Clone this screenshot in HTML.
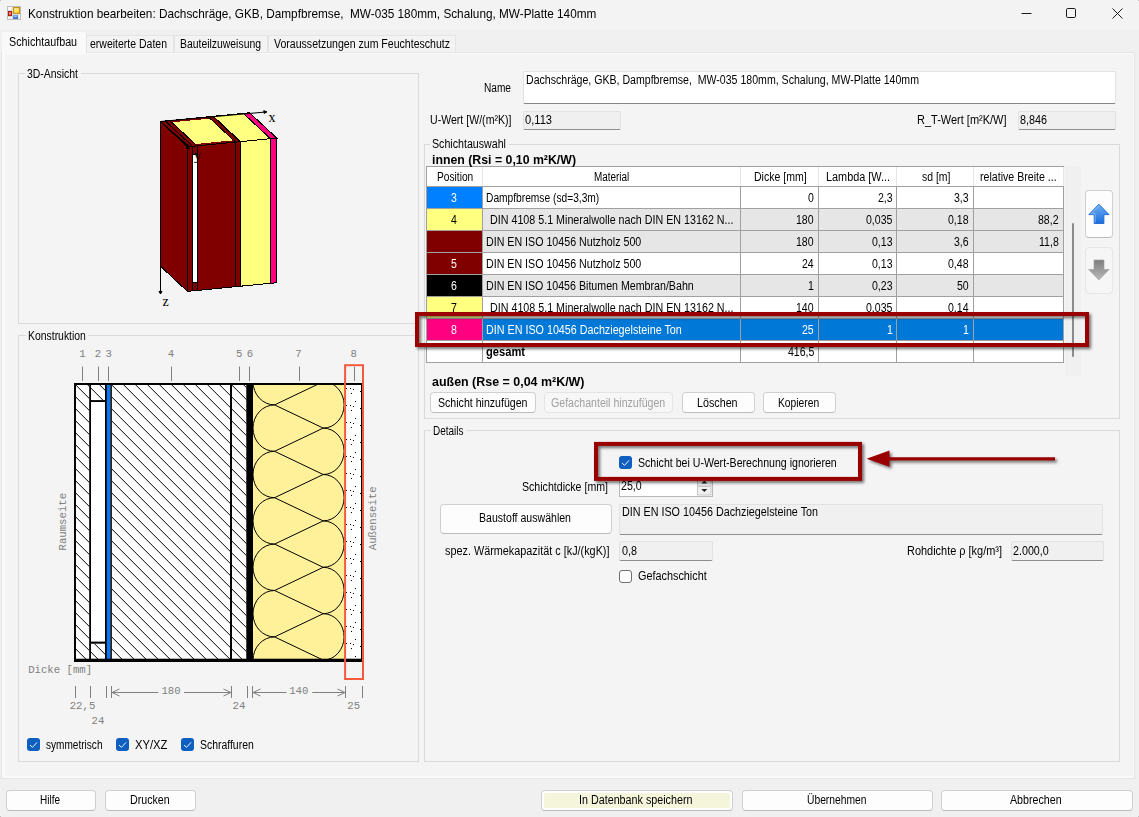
<!DOCTYPE html>
<html lang="de">
<head>
<meta charset="utf-8">
<title>Konstruktion bearbeiten</title>
<style>
html,body{margin:0;padding:0;}
body{width:1139px;height:817px;overflow:hidden;position:relative;background:#f0f0f0;
 font-family:"Liberation Sans",sans-serif;font-size:11px;color:#000;}
.a{position:absolute;box-sizing:border-box;}
.t{position:absolute;white-space:pre;}
.titlebar{left:0;top:0;width:1139px;height:29px;background:#f3f3f3;}
.band{left:1px;top:52px;width:1134px;height:727px;background:#fafafa;border:1px solid #e5e5e5;}
.page{left:5px;top:54px;width:1128px;height:722px;background:#f4f4f4;}
.tab{background:#f3f3f3;border:1px solid #e4e4e4;border-bottom:none;top:35px;height:18px;}
.tabact{background:#f9f9f9;top:32px;height:23px;left:2px;width:84px;border-radius:3px 3px 0 0;}
.gb{border:1px solid #dadada;}
.gbl{background:#f4f4f4;height:12px;}
.ro{background:#f0f0f0;border:1px solid #e2e2e2;border-bottom:1px solid #8f8f8f;border-radius:2px;}
.tb{background:#fff;border:1px solid #e2e2e2;border-bottom:1px solid #868686;border-radius:2px;}
.btn{background:#fdfdfd;border:1px solid #d0d0d0;border-bottom-color:#bcbcbc;border-radius:4px;}
.cb{width:13px;height:13px;border-radius:3px;}
.cbon{background:#0f5fc0;}
.cboff{background:#fdfdfd;border:1px solid #707070;}
.mono{font-family:"Liberation Mono",monospace;font-size:10.67px;fill:#808080;}
.ser{font-family:"Liberation Serif",serif;font-size:14px;fill:#000;}
</style>
</head>
<body>
<div class="a titlebar"></div>
<div class="a" style="left:0;top:0;width:1px;height:1px;background:#bdbdbd"></div><div class="a" style="left:1138px;top:0;width:1px;height:1px;background:#bdbdbd"></div><div class="a" style="left:0;top:816px;width:1px;height:1px;background:#bdbdbd"></div><div class="a" style="left:1138px;top:816px;width:1px;height:1px;background:#bdbdbd"></div>
<svg class="a" style="left:7px;top:6px" width="14" height="14" viewBox="0 0 14 14">
<defs><linearGradient id="iy" x1="0" y1="0" x2="1" y2="1"><stop offset="0" stop-color="#fff6c0"/><stop offset="1" stop-color="#ffcf1a"/></linearGradient>
<linearGradient id="ib" x1="0" y1="0" x2="0" y2="1"><stop offset="0" stop-color="#78b4f2"/><stop offset="1" stop-color="#2558c8"/></linearGradient></defs>
<rect x="0.5" y="0.5" width="13" height="13" fill="#dcdcdc" stroke="#bdbdbd"/>
<rect x="1.2" y="1.2" width="3.6" height="2.6" fill="#fff"/>
<rect x="1.2" y="11" width="1.7" height="1.8" fill="#fff"/><rect x="3.8" y="11" width="1.1" height="1.8" fill="#fff"/>
<rect x="11.8" y="9" width="1.1" height="3.8" fill="#fff"/>
<rect x="6.6" y="1.6" width="5.9" height="5.7" fill="url(#iy)" stroke="#c79200" stroke-width="1.1"/>
<rect x="1.5" y="5.5" width="3.1" height="4.1" fill="#e8473a" stroke="#9f1408" stroke-width="0.9"/>
<rect x="2.3" y="6.3" width="1.4" height="2" fill="#f9a8a0"/>
<rect x="6.1" y="8.9" width="4.9" height="4" fill="url(#ib)"/>
<rect x="7" y="10" width="2.6" height="1.2" fill="#a8c8ff" opacity="0.8"/>
</svg>
<svg class="a" style="left:1010px;top:0" width="129" height="29" viewBox="0 0 129 29">
<path d="M11.5 13.5H21.5" stroke="#1a1a1a" stroke-width="1" fill="none"/>
<rect x="56.5" y="8.5" width="9" height="9" rx="1.2" fill="none" stroke="#1a1a1a" stroke-width="1"/>
<path d="M102.5 8.5L112.5 18.5M112.5 8.5L102.5 18.5" stroke="#1a1a1a" stroke-width="1" fill="none"/>
</svg>
<div class="a tab" style="left:86px;width:88px"></div><div class="a tab" style="left:174px;width:94px"></div><div class="a tab" style="left:268px;width:188px"></div>
<div class="a band"></div><div class="a page"></div><div class="a tabact"></div>
<div class="a gb" style="left:18px;top:73px;width:401px;height:251px"></div><div class="a gbl" style="left:25px;top:68px;width:56px"></div>
<div class="a gb" style="left:18px;top:335px;width:401px;height:427px"></div><div class="a gbl" style="left:25.6px;top:330px;width:62.9px"></div>
<div class="a gb" style="left:424px;top:144px;width:696px;height:275px"></div><div class="a gbl" style="left:430px;top:139px;width:79px"></div>
<div class="a gb" style="left:424px;top:430px;width:696px;height:332px"></div><div class="a gbl" style="left:430.5px;top:425px;width:35.5px"></div>
<div class="a tb" style="left:522.5px;top:70.5px;width:593.5px;height:33px"></div>
<div class="a ro" style="left:522.5px;top:110.5px;width:98.5px;height:19px"></div>
<div class="a ro" style="left:1017.5px;top:110.5px;width:98.5px;height:19px"></div>
<div class="a" style="left:426px;top:166px;width:638px;height:197px;background:#fff;border:1px solid #a0a0a0;border-right:none"></div>
<div class="a" style="left:1065px;top:166px;width:16px;height:210px;background:#f0f0f0"></div>
<div class="a" style="left:1072px;top:223px;width:2px;height:134px;background:#8b8b8b;border-radius:1px"></div>
<div class="a" style="left:427px;top:186px;width:55px;height:22px;background:#0080ff"></div>
<div class="a" style="left:482px;top:186px;width:581px;height:22px;background:#fff"></div>
<div class="a" style="left:427px;top:208px;width:55px;height:22px;background:#ffff80"></div>
<div class="a" style="left:482px;top:208px;width:581px;height:22px;background:#e6e6e6"></div>
<div class="a" style="left:427px;top:230px;width:55px;height:22px;background:#800000"></div>
<div class="a" style="left:482px;top:230px;width:581px;height:22px;background:#e6e6e6"></div>
<div class="a" style="left:427px;top:252px;width:55px;height:22px;background:#800000"></div>
<div class="a" style="left:482px;top:252px;width:581px;height:22px;background:#fff"></div>
<div class="a" style="left:427px;top:274px;width:55px;height:22px;background:#000"></div>
<div class="a" style="left:482px;top:274px;width:581px;height:22px;background:#e6e6e6"></div>
<div class="a" style="left:427px;top:296px;width:55px;height:22px;background:#ffff80"></div>
<div class="a" style="left:482px;top:296px;width:581px;height:22px;background:#fff"></div>
<div class="a" style="left:427px;top:318px;width:55px;height:22px;background:#ff0080"></div>
<div class="a" style="left:482px;top:318px;width:581px;height:22px;background:#0078d7"></div>
<div class="a" style="left:427px;top:340px;width:55px;height:22px;background:#fff"></div>
<div class="a" style="left:482px;top:340px;width:581px;height:22px;background:#fff"></div>
<div class="a" style="left:426px;top:186px;width:638px;height:1px;background:#a0a0a0"></div>
<div class="a" style="left:426px;top:208px;width:638px;height:1px;background:#a0a0a0"></div>
<div class="a" style="left:426px;top:230px;width:638px;height:1px;background:#a0a0a0"></div>
<div class="a" style="left:426px;top:252px;width:638px;height:1px;background:#a0a0a0"></div>
<div class="a" style="left:426px;top:274px;width:638px;height:1px;background:#a0a0a0"></div>
<div class="a" style="left:426px;top:296px;width:638px;height:1px;background:#a0a0a0"></div>
<div class="a" style="left:426px;top:318px;width:638px;height:1px;background:#a0a0a0"></div>
<div class="a" style="left:426px;top:340px;width:638px;height:1px;background:#a0a0a0"></div>
<div class="a" style="left:426px;top:362px;width:638px;height:1px;background:#a0a0a0"></div>
<div class="a" style="left:482px;top:167px;width:1px;height:19px;background:#e5e5e5"></div>
<div class="a" style="left:482px;top:186px;width:1px;height:177px;background:#a0a0a0"></div>
<div class="a" style="left:740px;top:167px;width:1px;height:19px;background:#e5e5e5"></div>
<div class="a" style="left:740px;top:186px;width:1px;height:177px;background:#a0a0a0"></div>
<div class="a" style="left:818px;top:167px;width:1px;height:19px;background:#e5e5e5"></div>
<div class="a" style="left:818px;top:186px;width:1px;height:177px;background:#a0a0a0"></div>
<div class="a" style="left:896px;top:167px;width:1px;height:19px;background:#e5e5e5"></div>
<div class="a" style="left:896px;top:186px;width:1px;height:177px;background:#a0a0a0"></div>
<div class="a" style="left:973px;top:167px;width:1px;height:19px;background:#e5e5e5"></div>
<div class="a" style="left:973px;top:186px;width:1px;height:177px;background:#a0a0a0"></div>
<div class="a" style="left:1063px;top:167px;width:1px;height:19px;background:#e5e5e5"></div>
<div class="a" style="left:1063px;top:186px;width:1px;height:177px;background:#a0a0a0"></div>
<div class="a btn" style="left:1085px;top:190px;width:28px;height:48px"></div>
<div class="a btn" style="left:1085px;top:246.5px;width:28px;height:47.5px;background:#f6f6f6;border-color:#e6e6e6"></div>
<svg class="a" style="left:1085px;top:190px" width="28" height="105" viewBox="1085 190 28 105">
<defs><linearGradient id="gu" x1="0" y1="0" x2="0" y2="1"><stop offset="0" stop-color="#6cb0f4"/><stop offset="1" stop-color="#1a6cdc"/></linearGradient>
<linearGradient id="gd" x1="0" y1="0" x2="0" y2="1"><stop offset="0" stop-color="#7e7e7e"/><stop offset="1" stop-color="#b9b9b9"/></linearGradient></defs>
<path d="M1098.9 204.2L1109 214.6H1103.9V223.5H1094.2V214.6H1088.9Z" fill="url(#gu)" stroke="#1c66d2" stroke-width="0.9" stroke-linejoin="round"/><path d="M1098.9 205.8L1091.2 213.7H1095.2V222.6" fill="none" stroke="#a6d2fb" stroke-width="0.7" opacity="0.85"/>
<path d="M1094 260H1104V269.4H1109.2L1098.9 280L1088.7 269.4H1094Z" fill="url(#gd)" stroke="#a0a0a0" stroke-width="0.6"/>
</svg>
<div class="a btn" style="left:430px;top:392px;width:105.5px;height:21px"></div>
<div class="a btn" style="left:544px;top:392px;width:129px;height:21px;background:#f7f7f7;border-color:#e4e4e4"></div>
<div class="a btn" style="left:682px;top:392px;width:72.7px;height:21px"></div>
<div class="a btn" style="left:763px;top:392px;width:72.5px;height:21px"></div>
<div class="a cb cbon" style="left:619px;top:456px"></div><svg class="a" style="left:619px;top:456px" width="13" height="13" viewBox="0 0 13 13"><path d="M3.3 7.3L5.5 9.4L9.8 4.6" fill="none" stroke="#eef4fc" stroke-width="1" stroke-linecap="round" stroke-linejoin="round"/></svg>
<div class="a" style="left:619px;top:477.5px;width:94px;height:19px;background:#fff;border:1px solid #b8b8b8"></div>
<svg class="a" style="left:697px;top:477px" width="15" height="19" viewBox="0 0 15 19">
<rect x="0.5" y="0.5" width="13.5" height="8.5" fill="#f0f0f0" stroke="#c8c8c8"/><rect x="0.5" y="9.5" width="13.5" height="8.5" fill="#f0f0f0" stroke="#c8c8c8"/>
<path d="M4.3 6.5L7.3 3.5L10.3 6.5Z" fill="#222"/><path d="M4.3 12L7.3 15L10.3 12Z" fill="#222"/></svg>
<div class="a btn" style="left:440px;top:504px;width:172px;height:29.5px"></div>
<div class="a ro" style="left:619px;top:503.5px;width:484px;height:31px"></div>
<div class="a ro" style="left:619px;top:541px;width:94px;height:19.5px"></div>
<div class="a ro" style="left:1010.5px;top:541px;width:93px;height:19.5px"></div>
<div class="a cb cboff" style="left:619px;top:570px"></div>
<div class="a cb cbon" style="left:27px;top:738px"></div><svg class="a" style="left:27px;top:738px" width="13" height="13" viewBox="0 0 13 13"><path d="M3.3 7.3L5.5 9.4L9.8 4.6" fill="none" stroke="#eef4fc" stroke-width="1" stroke-linecap="round" stroke-linejoin="round"/></svg><div class="a cb cbon" style="left:116px;top:738px"></div><svg class="a" style="left:116px;top:738px" width="13" height="13" viewBox="0 0 13 13"><path d="M3.3 7.3L5.5 9.4L9.8 4.6" fill="none" stroke="#eef4fc" stroke-width="1" stroke-linecap="round" stroke-linejoin="round"/></svg><div class="a cb cbon" style="left:181px;top:738px"></div><svg class="a" style="left:181px;top:738px" width="13" height="13" viewBox="0 0 13 13"><path d="M3.3 7.3L5.5 9.4L9.8 4.6" fill="none" stroke="#eef4fc" stroke-width="1" stroke-linecap="round" stroke-linejoin="round"/></svg>
<div class="a btn" style="left:5.5px;top:790px;width:90.5px;height:21px"></div>
<div class="a btn" style="left:105px;top:790px;width:91px;height:21px"></div>
<div class="a btn" style="left:741.5px;top:790px;width:191px;height:21px"></div>
<div class="a btn" style="left:941px;top:790px;width:191.6px;height:21px"></div>
<div class="a btn" style="left:541px;top:790px;width:191.5px;height:21px;background:#fdfdfd"><div class="a" style="left:2px;top:2px;right:2px;bottom:2px;background:#f5f5dc;border-radius:2px"></div></div>
<svg class="a" style="left:0;top:0" width="430" height="770" viewBox="0 0 430 770">
<defs>
<pattern id="hat" patternUnits="userSpaceOnUse" width="12" height="12" patternTransform="translate(2.8,0)">
<path d="M-1 -1L13 13M-13 -1L1 13M11 -1L25 13" stroke="#000" stroke-width="1" fill="none"/></pattern>
<pattern id="dots" patternUnits="userSpaceOnUse" width="17" height="17" patternTransform="translate(346,388)">
<g fill="#000" shape-rendering="crispEdges"><rect x="0" y="0" width="1" height="1"/><rect x="4" y="0" width="1" height="1"/><rect x="7" y="1" width="1" height="1"/><rect x="5" y="5" width="1" height="1"/><rect x="9" y="13" width="1" height="1"/><rect x="14" y="3" width="1" height="1"/></g></pattern>
<clipPath id="cy"><rect x="253" y="385" width="91.1" height="274"/></clipPath>
</defs>
<g shape-rendering="crispEdges">
<polygon points="160.3,121.5 187.5,146.8 187.5,291.4 160.3,266.1" fill="#800000" stroke="#000" stroke-width="1"/>
<polygon points="160.3,121.5 165.3,121.0 192.5,146.3 187.5,146.8" fill="#800000" stroke="#000" stroke-width="1"/>
<polygon points="187.5,146.8 192.5,146.3 192.5,290.9 187.5,291.4" fill="#800000" stroke="#000" stroke-width="1"/>
<polygon points="165.3,121.0 170.0,120.6 197.2,145.9 192.5,146.3" fill="#800000" stroke="#000" stroke-width="1"/>
<polygon points="192.5,146.3 197.2,145.9 197.2,290.5 192.5,290.9" fill="#fff" stroke="#000" stroke-width="1"/>
<polygon points="192.5,146.3 197.2,145.9 197.2,154.4 192.5,154.8" fill="#800000" stroke="#000" stroke-width="1"/>
<polygon points="192.5,282.4 197.2,282.0 197.2,290.5 192.5,290.9" fill="#800000" stroke="#000" stroke-width="1"/>
<polygon points="170.0,120.6 208.3,116.8 235.5,142.1 197.2,145.9" fill="#ffff80" stroke="#000" stroke-width="1"/>
<polygon points="170.0,120.6 208.3,116.8 210.2,118.6 171.9,122.3" fill="#800000"/>
<polygon points="195.3,144.1 233.6,140.3 235.5,142.1 197.2,145.9" fill="#800000"/>
<polygon points="197.2,145.9 235.5,142.1 235.5,286.7 197.2,290.5" fill="#800000" stroke="#000" stroke-width="1"/>
<polygon points="208.3,116.8 213.0,116.4 240.2,141.7 235.5,142.1" fill="#800000" stroke="#000" stroke-width="1"/>
<polygon points="235.5,142.1 240.2,141.7 240.2,286.3 235.5,286.7" fill="#800000" stroke="#000" stroke-width="1"/>
<polygon points="213.0,116.4 213.3,116.3 240.5,141.6 240.2,141.7" fill="#000" stroke="#000" stroke-width="1"/>
<polygon points="240.2,141.7 240.5,141.6 240.5,286.2 240.2,286.3" fill="#000" stroke="#000" stroke-width="1"/>
<polygon points="213.3,116.3 243.3,113.4 270.5,138.7 240.5,141.6" fill="#ffff80" stroke="#000" stroke-width="1"/>
<polygon points="240.5,141.6 270.5,138.7 270.5,283.3 240.5,286.2" fill="#ffff80" stroke="#000" stroke-width="1"/>
<polygon points="243.3,113.4 249.6,112.8 276.8,138.1 270.5,138.7" fill="#ff0080" stroke="#000" stroke-width="1"/>
<polygon points="270.5,138.7 276.8,138.1 276.8,282.7 270.5,283.3" fill="#ff0080" stroke="#000" stroke-width="1"/>
</g>
<path d="M160.3 121.5L266.8 111.9M266.8 111.9l-3 -1.3l0.3 2.8zM160.5 121.5V293.5M160.5 294l-1.5 -2.6h3zM160.3 121.5L190 149l-3.8 -0.8l2.3 -2.6z" stroke="#000" stroke-width="1" fill="#000"/>
<text class="ser" x="268.5" y="122">x</text><text class="ser" x="162.5" y="305.5">z</text><text class="ser" x="194" y="159.5">y</text>
<rect x="75" y="384" width="287" height="276" fill="#fff"/>
<rect x="76" y="385" width="13.2" height="274" fill="url(#hat)"/>
<rect x="91" y="385" width="14" height="15.5" fill="url(#hat)"/><rect x="91" y="643.5" width="14" height="16" fill="url(#hat)"/>
<rect x="111.8" y="385" width="118.5" height="274" fill="url(#hat)"/>
<rect x="232" y="385" width="14.5" height="274" fill="url(#hat)"/>
<rect x="106.9" y="385" width="3.5" height="274" fill="#0078ff"/>
<rect x="253" y="385" width="91.1" height="274" fill="#fff19a"/>
<rect x="346" y="385" width="15.5" height="274" fill="url(#dots)"/>
<g clip-path="url(#cy)" fill="none" stroke="#000" stroke-width="1"><path d="M274.6 312.1A21.6 23.2 0 0 0 274.6 358.5M323.2 335.3A20.9 23.2 0 0 1 323.2 381.7M323.2 335.3L274.6 358.5L323.2 381.7M274.6 358.5A21.6 23.2 0 0 0 274.6 404.9M323.2 381.7A20.9 23.2 0 0 1 323.2 428.1M323.2 381.7L274.6 404.9L323.2 428.1M274.6 404.9A21.6 23.2 0 0 0 274.6 451.3M323.2 428.1A20.9 23.2 0 0 1 323.2 474.5M323.2 428.1L274.6 451.3L323.2 474.5M274.6 451.3A21.6 23.2 0 0 0 274.6 497.7M323.2 474.5A20.9 23.2 0 0 1 323.2 520.9M323.2 474.5L274.6 497.7L323.2 520.9M274.6 497.7A21.6 23.2 0 0 0 274.6 544.1M323.2 520.9A20.9 23.2 0 0 1 323.2 567.3M323.2 520.9L274.6 544.1L323.2 567.3M274.6 544.1A21.6 23.2 0 0 0 274.6 590.5M323.2 567.3A20.9 23.2 0 0 1 323.2 613.7M323.2 567.3L274.6 590.5L323.2 613.7M274.6 590.5A21.6 23.2 0 0 0 274.6 636.9M323.2 613.7A20.9 23.2 0 0 1 323.2 660.1M323.2 613.7L274.6 636.9L323.2 660.1M274.6 636.9A21.6 23.2 0 0 0 274.6 683.3M323.2 660.1A20.9 23.2 0 0 1 323.2 706.5M323.2 660.1L274.6 683.3L323.2 706.5M274.6 683.3A21.6 23.2 0 0 0 274.6 729.7M323.2 706.5A20.9 23.2 0 0 1 323.2 752.9M323.2 706.5L274.6 729.7L323.2 752.9"/></g>
<rect x="74" y="383" width="2" height="279" fill="#000"/>
<rect x="89.2" y="383" width="1.8" height="279" fill="#000"/>
<rect x="105" y="383" width="1.9" height="279" fill="#000"/>
<rect x="110.3" y="383" width="1.55" height="279" fill="#000"/>
<rect x="230" y="383" width="2" height="279" fill="#000"/>
<rect x="246.3" y="383" width="6.7" height="279" fill="#000"/>
<rect x="361" y="383" width="1.4" height="279" fill="#000"/>
<rect x="74" y="383" width="288.4" height="2" fill="#000"/><rect x="74" y="658.7" width="288.4" height="3.3" fill="#000"/>
<rect x="91" y="400.1" width="14" height="1.9" fill="#000"/><rect x="91" y="641.6" width="14" height="2.1" fill="#000"/>
<text class="mono" x="82.5" y="357" text-anchor="middle">1</text>
<path d="M82.5 366.5V381" stroke="#808080" stroke-width="1"/>
<text class="mono" x="98" y="357" text-anchor="middle">2</text>
<path d="M98.5 366.5V381" stroke="#808080" stroke-width="1"/>
<text class="mono" x="108.6" y="357" text-anchor="middle">3</text>
<path d="M108.5 366.5V381" stroke="#808080" stroke-width="1"/>
<text class="mono" x="171" y="357" text-anchor="middle">4</text>
<path d="M171.5 366.5V381" stroke="#808080" stroke-width="1"/>
<text class="mono" x="239.1" y="357" text-anchor="middle">5</text>
<path d="M239.5 366.5V381" stroke="#808080" stroke-width="1"/>
<text class="mono" x="249.9" y="357" text-anchor="middle">6</text>
<path d="M249.5 366.5V381" stroke="#808080" stroke-width="1"/>
<text class="mono" x="298.5" y="357" text-anchor="middle">7</text>
<path d="M299.5 366.5V381" stroke="#808080" stroke-width="1"/>
<text class="mono" x="353.7" y="357" text-anchor="middle">8</text>
<path d="M354.5 366.5V381" stroke="#808080" stroke-width="1"/>
<rect x="345.1" y="365.2" width="17.9" height="313.8" fill="none" stroke="#f55a3c" stroke-width="2"/>
<path d="M75.5 686V698M90.5 686V698M106.5 686V698M111.5 686V698M231.5 686V698M247.5 686V698M252.5 686V698M345.5 686V698M362.5 686V698M111.5 692.5H158.4M184 692.5H231.5M252.5 692.5H286.5M312.2 692.5H345.5M119.5 689L112 692.5L119.5 696M223.5 689L231 692.5L223.5 696M260.5 689L253 692.5L260.5 696M337.5 689L345 692.5L337.5 696" stroke="#808080" stroke-width="1" fill="none"/>
<text class="mono" x="171" y="694.2" text-anchor="middle">180</text><text class="mono" x="298.8" y="694.2" text-anchor="middle">140</text>
<text class="mono" x="82.5" y="708.8" text-anchor="middle">22,5</text><text class="mono" x="98" y="723.7" text-anchor="middle">24</text><text class="mono" x="239" y="708.8" text-anchor="middle">24</text><text class="mono" x="353.7" y="708.8" text-anchor="middle">25</text>
<text class="mono" x="28.2" y="672.8">Dicke [mm]</text>
<text class="mono" transform="translate(66,521.7) rotate(-90)" text-anchor="middle">Raumseite</text>
<text class="mono" transform="translate(376.3,518.3) rotate(-90)" text-anchor="middle">Außenseite</text>
</svg>
<div class="t" style="left:27.70px;top:7.00px;font-size:13px;line-height:13px;color:#000;transform:scaleX(0.9058);transform-origin:0 0;">Konstruktion bearbeiten: Dachschräge, GKB, Dampfbremse, &nbsp;MW-035 180mm, Schalung, MW-Platte 140mm</div>
<div class="t" style="left:9.20px;top:35.84px;font-size:12px;line-height:12px;color:#000;transform:scaleX(0.8953);transform-origin:0 0;">Schichtaufbau</div>
<div class="t" style="left:90.00px;top:37.84px;font-size:12px;line-height:12px;color:#000;transform:scaleX(0.8745);transform-origin:0 0;">erweiterte Daten</div>
<div class="t" style="left:180.00px;top:37.84px;font-size:12px;line-height:12px;color:#000;transform:scaleX(0.8672);transform-origin:0 0;">Bauteilzuweisung</div>
<div class="t" style="left:274.00px;top:37.84px;font-size:12px;line-height:12px;color:#000;transform:scaleX(0.8795);transform-origin:0 0;">Voraussetzungen zum Feuchteschutz</div>
<div class="t" style="left:484.00px;top:81.84px;font-size:12px;line-height:12px;color:#000;transform:scaleX(0.8433);transform-origin:0 0;">Name</div>
<div class="t" style="left:525.50px;top:73.84px;font-size:12px;line-height:12px;color:#000;transform:scaleX(0.8817);transform-origin:0 0;">Dachschräge, GKB, Dampfbremse, &nbsp;MW-035 180mm, Schalung, MW-Platte 140mm</div>
<div class="t" style="left:429.50px;top:114.34px;font-size:12px;line-height:12px;color:#000;transform:scaleX(0.8817);transform-origin:0 0;">U-Wert [W/(m²K)]</div>
<div class="t" style="left:525.00px;top:113.84px;font-size:12px;line-height:12px;color:#000;transform:scaleX(0.9265);transform-origin:0 0;">0,113</div>
<div class="t" style="left:917.00px;top:114.34px;font-size:12px;line-height:12px;color:#000;transform:scaleX(0.9153);transform-origin:0 0;">R_T-Wert [m²K/W]</div>
<div class="t" style="left:1019.50px;top:113.84px;font-size:12px;line-height:12px;color:#000;transform:scaleX(0.8991);transform-origin:0 0;">8,846</div>
<div class="t" style="left:432.00px;top:153.84px;font-size:12px;line-height:12px;color:#000;font-weight:bold;transform:scaleX(1.0259);transform-origin:0 0;">innen (Rsi = 0,10 m²K/W)</div>
<div class="t" style="left:432.00px;top:375.84px;font-size:12px;line-height:12px;color:#000;font-weight:bold;transform:scaleX(1.0371);transform-origin:0 0;">außen (Rse = 0,04 m²K/W)</div>
<div class="t" style="left:437.00px;top:171.04px;font-size:12px;line-height:12px;color:#000;transform:scaleX(0.8489);transform-origin:0 0;">Position</div>
<div class="t" style="left:594.25px;top:171.04px;font-size:12px;line-height:12px;color:#000;transform:scaleX(0.8258);transform-origin:0 0;">Material</div>
<div class="t" style="left:754.20px;top:171.04px;font-size:12px;line-height:12px;color:#000;transform:scaleX(0.8783);transform-origin:0 0;">Dicke [mm]</div>
<div class="t" style="left:826.30px;top:171.04px;font-size:12px;line-height:12px;color:#000;transform:scaleX(0.9052);transform-origin:0 0;">Lambda [W...</div>
<div class="t" style="left:921.80px;top:171.04px;font-size:12px;line-height:12px;color:#000;transform:scaleX(0.8692);transform-origin:0 0;">sd [m]</div>
<div class="t" style="left:980.00px;top:171.04px;font-size:12px;line-height:12px;color:#000;transform:scaleX(0.8846);transform-origin:0 0;">relative Breite ...</div>
<div class="t" style="left:451.06px;top:191.84px;font-size:12px;line-height:12px;color:#fff;transform:scaleX(0.8800);transform-origin:0 0;">3</div>
<div class="t" style="left:486.25px;top:191.84px;font-size:12px;line-height:12px;color:#000;transform:scaleX(0.8512);transform-origin:0 0;">Dampfbremse (sd=3,3m)</div>
<div class="t" style="left:808.12px;top:191.84px;font-size:12px;line-height:12px;color:#000;transform:scaleX(0.8800);transform-origin:0 0;">0</div>
<div class="t" style="left:877.82px;top:191.84px;font-size:12px;line-height:12px;color:#000;transform:scaleX(0.8800);transform-origin:0 0;">2,3</div>
<div class="t" style="left:954.32px;top:191.84px;font-size:12px;line-height:12px;color:#000;transform:scaleX(0.8800);transform-origin:0 0;">3,3</div>
<div class="t" style="left:451.06px;top:213.84px;font-size:12px;line-height:12px;color:#000;transform:scaleX(0.8800);transform-origin:0 0;">4</div>
<div class="t" style="left:489.50px;top:213.84px;font-size:12px;line-height:12px;color:#000;transform:scaleX(0.8926);transform-origin:0 0;">DIN 4108 5.1 Mineralwolle nach DIN EN 13162 N...</div>
<div class="t" style="left:796.37px;top:213.84px;font-size:12px;line-height:12px;color:#000;transform:scaleX(0.8800);transform-origin:0 0;">180</div>
<div class="t" style="left:866.07px;top:213.84px;font-size:12px;line-height:12px;color:#000;transform:scaleX(0.8800);transform-origin:0 0;">0,035</div>
<div class="t" style="left:948.44px;top:213.84px;font-size:12px;line-height:12px;color:#000;transform:scaleX(0.8800);transform-origin:0 0;">0,18</div>
<div class="t" style="left:1038.44px;top:213.84px;font-size:12px;line-height:12px;color:#000;transform:scaleX(0.8800);transform-origin:0 0;">88,2</div>
<div class="t" style="left:486.25px;top:235.84px;font-size:12px;line-height:12px;color:#000;transform:scaleX(0.8883);transform-origin:0 0;">DIN EN ISO 10456 Nutzholz 500</div>
<div class="t" style="left:796.37px;top:235.84px;font-size:12px;line-height:12px;color:#000;transform:scaleX(0.8800);transform-origin:0 0;">180</div>
<div class="t" style="left:871.94px;top:235.84px;font-size:12px;line-height:12px;color:#000;transform:scaleX(0.8800);transform-origin:0 0;">0,13</div>
<div class="t" style="left:954.32px;top:235.84px;font-size:12px;line-height:12px;color:#000;transform:scaleX(0.8800);transform-origin:0 0;">3,6</div>
<div class="t" style="left:1039.23px;top:235.84px;font-size:12px;line-height:12px;color:#000;transform:scaleX(0.8800);transform-origin:0 0;">11,8</div>
<div class="t" style="left:451.06px;top:257.84px;font-size:12px;line-height:12px;color:#fff;transform:scaleX(0.8800);transform-origin:0 0;">5</div>
<div class="t" style="left:486.25px;top:257.84px;font-size:12px;line-height:12px;color:#000;transform:scaleX(0.8883);transform-origin:0 0;">DIN EN ISO 10456 Nutzholz 500</div>
<div class="t" style="left:802.24px;top:257.84px;font-size:12px;line-height:12px;color:#000;transform:scaleX(0.8800);transform-origin:0 0;">24</div>
<div class="t" style="left:871.94px;top:257.84px;font-size:12px;line-height:12px;color:#000;transform:scaleX(0.8800);transform-origin:0 0;">0,13</div>
<div class="t" style="left:948.44px;top:257.84px;font-size:12px;line-height:12px;color:#000;transform:scaleX(0.8800);transform-origin:0 0;">0,48</div>
<div class="t" style="left:451.06px;top:279.84px;font-size:12px;line-height:12px;color:#fff;transform:scaleX(0.8800);transform-origin:0 0;">6</div>
<div class="t" style="left:486.25px;top:279.84px;font-size:12px;line-height:12px;color:#000;transform:scaleX(0.8873);transform-origin:0 0;">DIN EN ISO 10456 Bitumen Membran/Bahn</div>
<div class="t" style="left:808.12px;top:279.84px;font-size:12px;line-height:12px;color:#000;transform:scaleX(0.8800);transform-origin:0 0;">1</div>
<div class="t" style="left:871.94px;top:279.84px;font-size:12px;line-height:12px;color:#000;transform:scaleX(0.8800);transform-origin:0 0;">0,23</div>
<div class="t" style="left:957.24px;top:279.84px;font-size:12px;line-height:12px;color:#000;transform:scaleX(0.8800);transform-origin:0 0;">50</div>
<div class="t" style="left:451.06px;top:301.84px;font-size:12px;line-height:12px;color:#000;transform:scaleX(0.8800);transform-origin:0 0;">7</div>
<div class="t" style="left:489.50px;top:301.84px;font-size:12px;line-height:12px;color:#000;transform:scaleX(0.8926);transform-origin:0 0;">DIN 4108 5.1 Mineralwolle nach DIN EN 13162 N...</div>
<div class="t" style="left:796.37px;top:301.84px;font-size:12px;line-height:12px;color:#000;transform:scaleX(0.8800);transform-origin:0 0;">140</div>
<div class="t" style="left:866.07px;top:301.84px;font-size:12px;line-height:12px;color:#000;transform:scaleX(0.8800);transform-origin:0 0;">0,035</div>
<div class="t" style="left:948.44px;top:301.84px;font-size:12px;line-height:12px;color:#000;transform:scaleX(0.8800);transform-origin:0 0;">0,14</div>
<div class="t" style="left:451.06px;top:323.84px;font-size:12px;line-height:12px;color:#fff;transform:scaleX(0.8800);transform-origin:0 0;">8</div>
<div class="t" style="left:486.25px;top:323.84px;font-size:12px;line-height:12px;color:#fff;transform:scaleX(0.8956);transform-origin:0 0;">DIN EN ISO 10456 Dachziegelsteine Ton</div>
<div class="t" style="left:802.24px;top:323.84px;font-size:12px;line-height:12px;color:#fff;transform:scaleX(0.8800);transform-origin:0 0;">25</div>
<div class="t" style="left:886.62px;top:323.84px;font-size:12px;line-height:12px;color:#fff;transform:scaleX(0.8800);transform-origin:0 0;">1</div>
<div class="t" style="left:963.12px;top:323.84px;font-size:12px;line-height:12px;color:#fff;transform:scaleX(0.8800);transform-origin:0 0;">1</div>
<div class="t" style="left:485.50px;top:345.54px;font-size:12px;line-height:12px;color:#000;font-weight:bold;transform:scaleX(0.9279);transform-origin:0 0;">gesamt</div>
<div class="t" style="left:787.57px;top:345.84px;font-size:12px;line-height:12px;color:#000;transform:scaleX(0.8800);transform-origin:0 0;">416,5</div>
<div class="t" style="left:437.50px;top:396.84px;font-size:12px;line-height:12px;color:#000;transform:scaleX(0.8826);transform-origin:0 0;">Schicht hinzufügen</div>
<div class="t" style="left:550.75px;top:396.84px;font-size:12px;line-height:12px;color:#a0a0a0;transform:scaleX(0.8827);transform-origin:0 0;">Gefachanteil hinzufügen</div>
<div class="t" style="left:697.00px;top:396.84px;font-size:12px;line-height:12px;color:#000;transform:scaleX(0.8948);transform-origin:0 0;">Löschen</div>
<div class="t" style="left:778.10px;top:396.84px;font-size:12px;line-height:12px;color:#000;transform:scaleX(0.8575);transform-origin:0 0;">Kopieren</div>
<div class="t" style="left:479.25px;top:512.34px;font-size:12px;line-height:12px;color:#000;transform:scaleX(0.8801);transform-origin:0 0;">Baustoff auswählen</div>
<div class="t" style="left:40.00px;top:794.34px;font-size:12px;line-height:12px;color:#000;transform:scaleX(0.8328);transform-origin:0 0;">Hilfe</div>
<div class="t" style="left:130.25px;top:794.34px;font-size:12px;line-height:12px;color:#000;transform:scaleX(0.8895);transform-origin:0 0;">Drucken</div>
<div class="t" style="left:579.00px;top:794.34px;font-size:12px;line-height:12px;color:#000;transform:scaleX(0.8955);transform-origin:0 0;">In Datenbank speichern</div>
<div class="t" style="left:806.60px;top:794.34px;font-size:12px;line-height:12px;color:#000;transform:scaleX(0.8562);transform-origin:0 0;">Übernehmen</div>
<div class="t" style="left:1010.00px;top:794.34px;font-size:12px;line-height:12px;color:#000;transform:scaleX(0.8889);transform-origin:0 0;">Abbrechen</div>
<div class="t" style="left:638.00px;top:456.84px;font-size:12px;line-height:12px;color:#000;transform:scaleX(0.8824);transform-origin:0 0;">Schicht bei U-Wert-Berechnung ignorieren</div>
<div class="t" style="left:522.00px;top:480.84px;font-size:12px;line-height:12px;color:#000;transform:scaleX(0.8833);transform-origin:0 0;">Schichtdicke [mm]</div>
<div class="t" style="left:621.10px;top:479.64px;font-size:12px;line-height:12px;color:#000;transform:scaleX(0.8862);transform-origin:0 0;">25,0</div>
<div class="t" style="left:622.00px;top:506.34px;font-size:12px;line-height:12px;color:#000;transform:scaleX(0.8967);transform-origin:0 0;">DIN EN ISO 10456 Dachziegelsteine Ton</div>
<div class="t" style="left:444.50px;top:544.84px;font-size:12px;line-height:12px;color:#000;transform:scaleX(0.9035);transform-origin:0 0;">spez. Wärmekapazität c [kJ/(kgK)]</div>
<div class="t" style="left:622.00px;top:544.84px;font-size:12px;line-height:12px;color:#000;transform:scaleX(0.8989);transform-origin:0 0;">0,8</div>
<div class="t" style="left:637.50px;top:569.84px;font-size:12px;line-height:12px;color:#000;transform:scaleX(0.9040);transform-origin:0 0;">Gefachschicht</div>
<div class="t" style="left:907.00px;top:544.84px;font-size:12px;line-height:12px;color:#000;transform:scaleX(0.9117);transform-origin:0 0;">Rohdichte ρ [kg/m³]</div>
<div class="t" style="left:1012.75px;top:544.84px;font-size:12px;line-height:12px;color:#000;transform:scaleX(0.8927);transform-origin:0 0;">2.000,0</div>
<div class="t" style="left:45.50px;top:738.84px;font-size:12px;line-height:12px;color:#000;transform:scaleX(0.8390);transform-origin:0 0;">symmetrisch</div>
<div class="t" style="left:135.00px;top:738.84px;font-size:12px;line-height:12px;color:#000;transform:scaleX(0.9369);transform-origin:0 0;">XY/XZ</div>
<div class="t" style="left:200.00px;top:738.84px;font-size:12px;line-height:12px;color:#000;transform:scaleX(0.8693);transform-origin:0 0;">Schraffuren</div>
<div class="t" style="left:27.00px;top:67.84px;font-size:12px;line-height:12px;color:#000;transform:scaleX(0.8690);transform-origin:0 0;">3D-Ansicht</div>
<div class="t" style="left:27.60px;top:330.14px;font-size:12px;line-height:12px;color:#000;transform:scaleX(0.8680);transform-origin:0 0;">Konstruktion</div>
<div class="t" style="left:432.00px;top:137.84px;font-size:12px;line-height:12px;color:#000;transform:scaleX(0.8874);transform-origin:0 0;">Schichtauswahl</div>
<div class="t" style="left:432.50px;top:424.84px;font-size:12px;line-height:12px;color:#000;transform:scaleX(0.8313);transform-origin:0 0;">Details</div>
<svg class="a" style="left:0;top:0;filter:drop-shadow(2px 2px 1.5px rgba(0,0,0,0.55))" width="1139" height="817" viewBox="0 0 1139 817">
<rect x="417" y="314" width="670" height="31" fill="none" stroke="#9b0000" stroke-width="4"/>
<rect x="596" y="443.9" width="264" height="35" fill="none" stroke="#9b0000" stroke-width="4"/>
<path d="M866.5 458.8L889.5 450.6V457.2H1055V460.6H889.5V466.8Z" fill="#9b0000"/>
</svg>
</body>
</html>
